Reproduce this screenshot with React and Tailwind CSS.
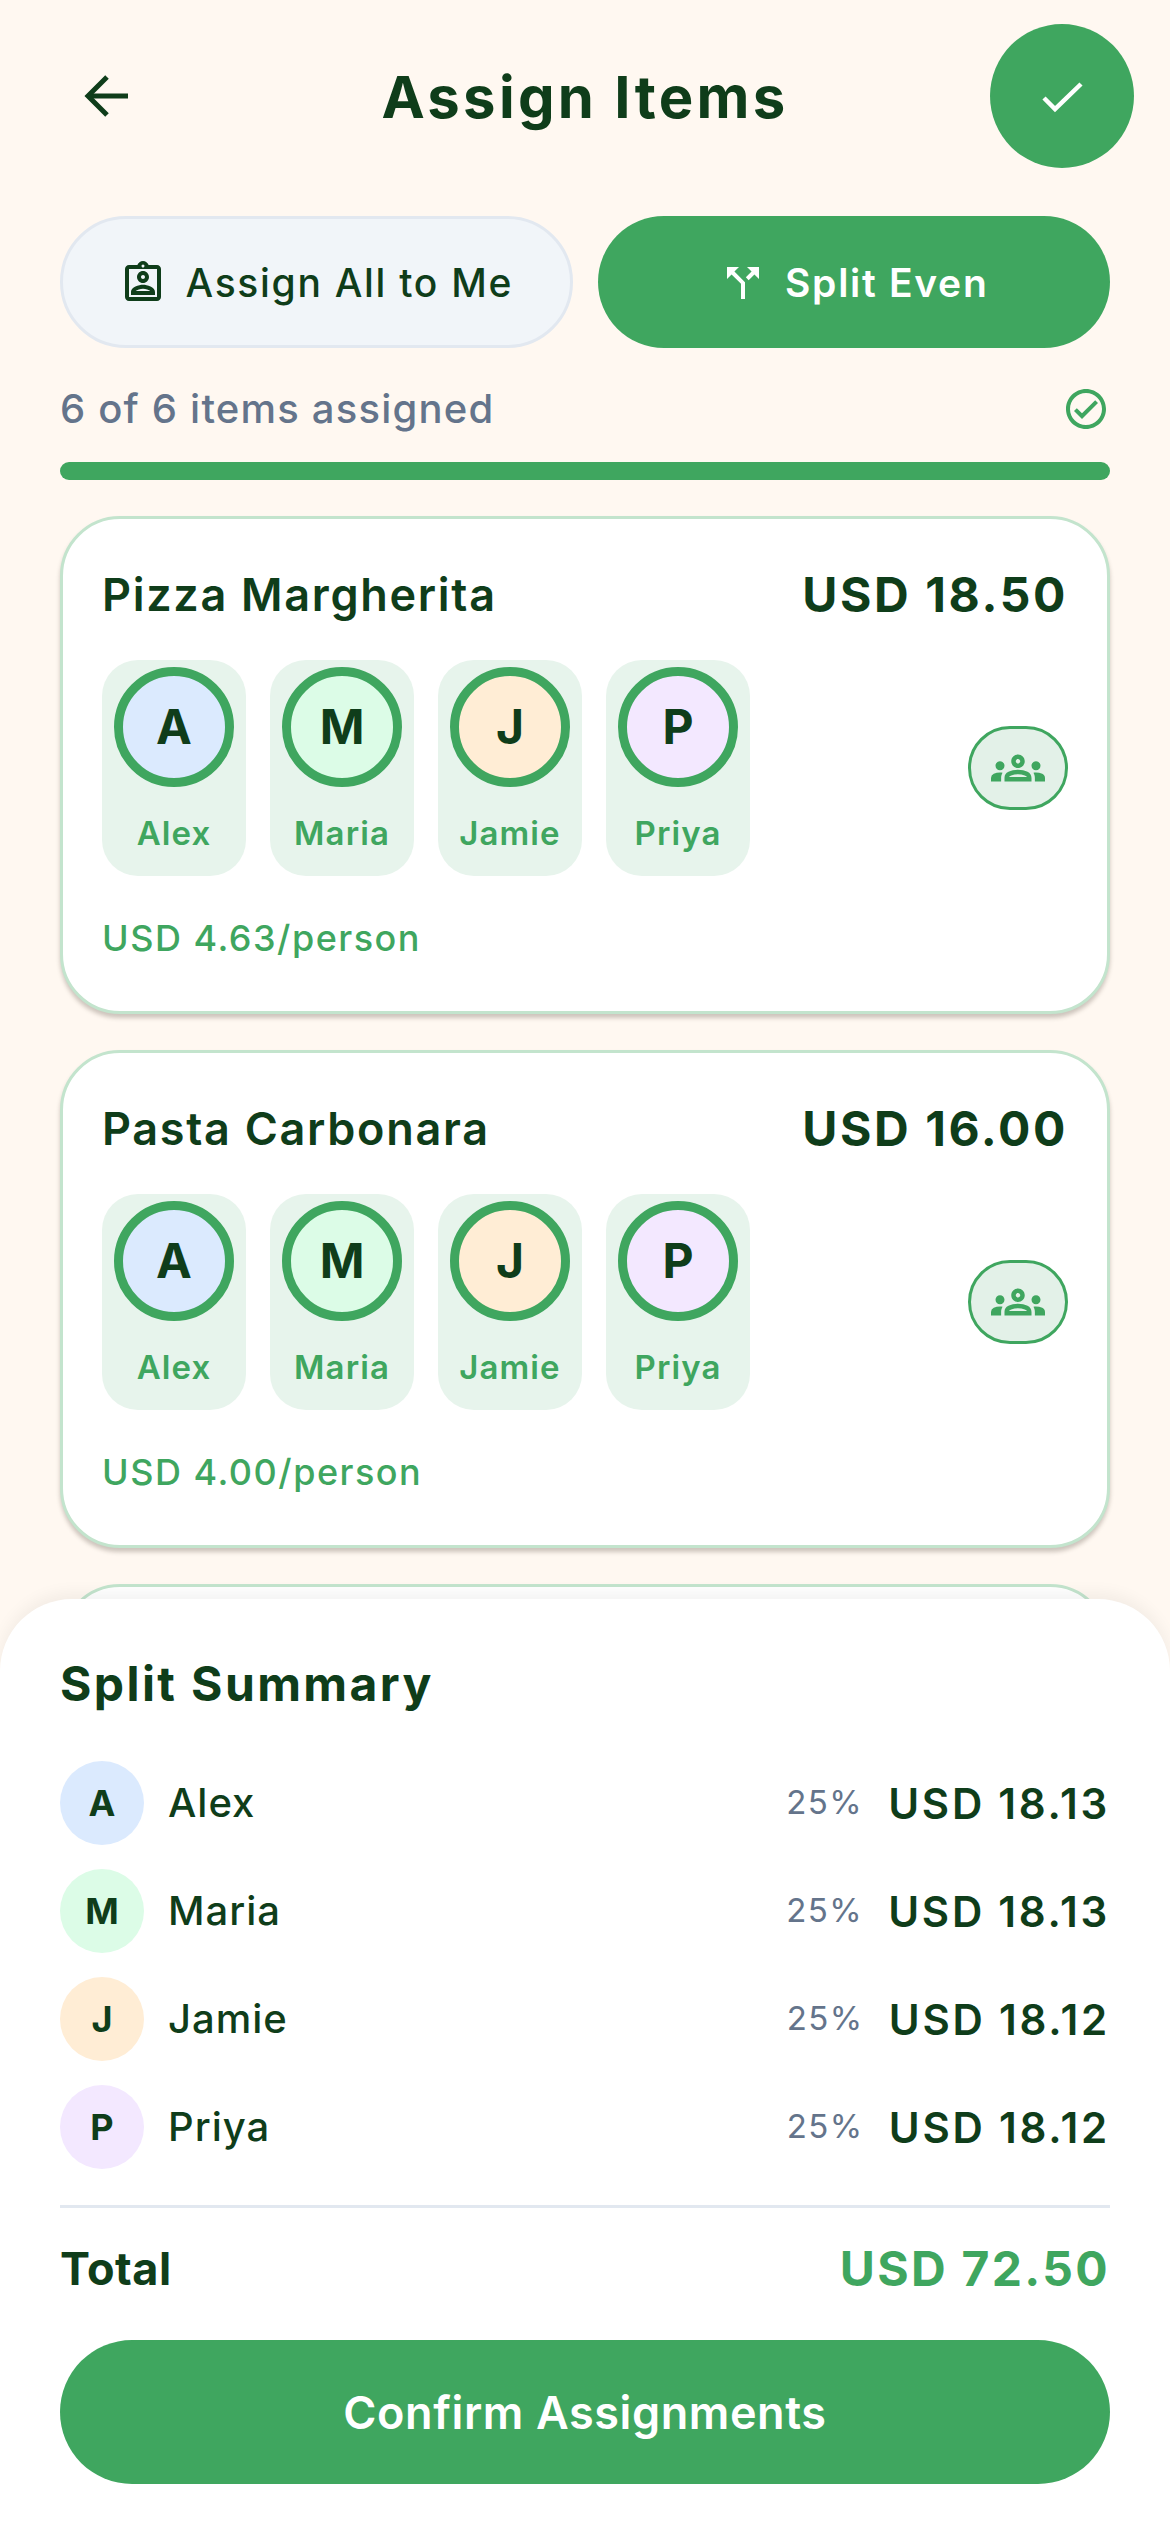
import { MdOutlineAssignmentInd, MdCallSplit, MdOutlineGroups, MdOutlineCheckCircle } from "react-icons/md";

const people = [
  { name: "Alex", initial: "A", tint: "bg-[#dbeafe]", pct: "25%", share: "USD 18.13" },
  { name: "Maria", initial: "M", tint: "bg-[#dcfce7]", pct: "25%", share: "USD 18.13" },
  { name: "Jamie", initial: "J", tint: "bg-[#ffedd5]", pct: "25%", share: "USD 18.12" },
  { name: "Priya", initial: "P", tint: "bg-[#f3e8ff]", pct: "25%", share: "USD 18.12" },
];

const items = [
  { name: "Pizza Margherita", price: "USD 18.50", each: "USD 4.63/person" },
  { name: "Pasta Carbonara", price: "USD 16.00", each: "USD 4.00/person" },
];

function ItemCard({ item }) {
  return (
    <div className="h-[498px] shrink-0 rounded-[60px] border-[3px] border-[#c3e4cd] bg-white px-[39px] pt-[49px] shadow-[0_4px_4px_rgba(60,50,40,0.26)]">
      <div className="flex h-[54px] items-center justify-between">
        <span className="text-[45px] font-semibold tracking-[1.7px] text-[#0f3d1a]">{item.name}</span>
        <span className="text-[48px] font-bold tracking-[2.6px] text-[#0f3d1a]">{item.price}</span>
      </div>
      <div className="mt-[38px] flex items-center justify-between">
        <div className="flex gap-[24px]">
          {people.map((p) => (
            <div key={p.name} className="flex h-[216px] w-[144px] flex-col items-center rounded-[36px] bg-[#e7f4ec] pt-[7px]">
              <div className={`flex h-[120px] w-[120px] items-center justify-center rounded-full border-[9px] border-[#3fa65f] text-[48px] font-bold text-[#0f3d1a] ${p.tint}`}>
                {p.initial}
              </div>
              <span className="mt-[24px] text-[33px] font-semibold leading-[44px] tracking-[1.1px] text-[#3fa65f]">{p.name}</span>
            </div>
          ))}
        </div>
        <div className="flex h-[84px] w-[100px] items-center justify-center rounded-[42px] border-[3px] border-[#3fa65f] bg-[#e3f1e8] text-[#3fa65f]">
          <MdOutlineGroups size={54} />
        </div>
      </div>
      <div className="mt-[40px] text-[36px] font-medium leading-[44px] tracking-[1.5px] text-[#3fa65f]">{item.each}</div>
    </div>
  );
}

export default function App() {
  return (
    <div className="relative h-[2532px] w-[1170px] overflow-hidden bg-[#fff8f1] font-['Inter',sans-serif]">
      <header className="flex h-[192px] items-center justify-between px-[36px]">
        <button className="flex h-[144px] w-[144px] items-center pl-[48px] text-[#0f3d1a]" aria-label="Back">
          <svg width="48" height="48" viewBox="0 0 48 48" fill="none" stroke="currentColor" strokeWidth="5">
            <path d="M44 24H6" />
            <path d="M23 5 4 24l19 19" />
          </svg>
        </button>
        <h1 className="pt-[2px] text-[58px] font-bold tracking-[3.3px] text-[#0f3d1a]">Assign Items</h1>
        <button className="flex h-[144px] w-[144px] items-center justify-center rounded-full bg-[#3fa65f] text-white" aria-label="Confirm">
          <svg width="48" height="48" viewBox="0 0 48 48" fill="none" stroke="currentColor" strokeWidth="4.5">
            <path d="M6 26 17 37 43 12" />
          </svg>
        </button>
      </header>

      <div className="mt-[24px] grid grid-cols-2 gap-[25px] px-[60px]">
        <button className="flex h-[132px] items-center justify-center gap-[18px] rounded-full border-[3px] border-[#e2e8f0] bg-[#f1f5f9] pt-[2px] text-[39px] font-medium tracking-[1.7px] text-[#0f3d1a]">
          <MdOutlineAssignmentInd size={48} />
          Assign All to Me
        </button>
        <button className="flex h-[132px] items-center justify-center gap-[18px] rounded-full bg-[#3fa65f] pt-[2px] text-[39px] font-semibold tracking-[1.7px] text-white">
          <MdCallSplit size={48} />
          Split Even
        </button>
      </div>

      <div className="mt-[36px] flex h-[50px] items-center justify-between px-[60px] text-[#64748b]">
        <span className="text-[40px] font-medium tracking-[1.2px]">6 of 6 items assigned</span>
        <MdOutlineCheckCircle size={48} className="text-[#3fa65f]" />
      </div>

      <div className="mx-[60px] mt-[28px] h-[18px] rounded-full bg-[#3fa65f]" />

      <div className="mt-[36px] flex flex-col gap-[36px] px-[60px]">
        {items.map((item) => (
          <ItemCard key={item.name} item={item} />
        ))}
        <div className="h-[498px] shrink-0 rounded-[60px] border-[3px] border-[#c3e4cd] bg-white" />
      </div>

      <section className="absolute inset-x-0 bottom-0 h-[933px] rounded-t-[72px] bg-white px-[60px] pt-[58px] shadow-[0_-6px_16px_rgba(0,0,0,0.05)]">
        <h2 className="text-[48px] font-bold leading-[54px] tracking-[2.4px] text-[#0f3d1a]">Split Summary</h2>
        <div className="mt-[50px] flex flex-col gap-[24px]">
          {people.map((p) => (
            <div key={p.name} className="flex h-[84px] items-center">
              <div className={`flex h-[84px] w-[84px] items-center justify-center rounded-full text-[36px] font-bold text-[#0f3d1a] ${p.tint}`}>
                {p.initial}
              </div>
              <span className="ml-[24px] flex-1 text-[40px] font-medium tracking-[1px] text-[#0f3d1a]">{p.name}</span>
              <span className="text-[33px] tracking-[1.5px] text-[#64748b]">{p.pct}</span>
              <span className="ml-[25px] text-[42px] font-semibold tracking-[2.75px] text-[#0f3d1a]">{p.share}</span>
            </div>
          ))}
        </div>
        <div className="mt-[36px] h-[3px] bg-[#e2e8f0]" />
        <div className="mt-[31px] flex h-[60px] items-center justify-between">
          <span className="text-[45px] font-bold tracking-[0.5px] text-[#0f3d1a]">Total</span>
          <span className="text-[48px] font-bold tracking-[2.3px] text-[#3fa65f]">USD 72.50</span>
        </div>
        <button className="mt-[41px] flex h-[144px] w-full items-center justify-center rounded-full bg-[#3fa65f] pt-[1px] text-[45px] font-semibold tracking-[0.6px] text-white">
          Confirm Assignments
        </button>
      </section>
    </div>
  );
}
